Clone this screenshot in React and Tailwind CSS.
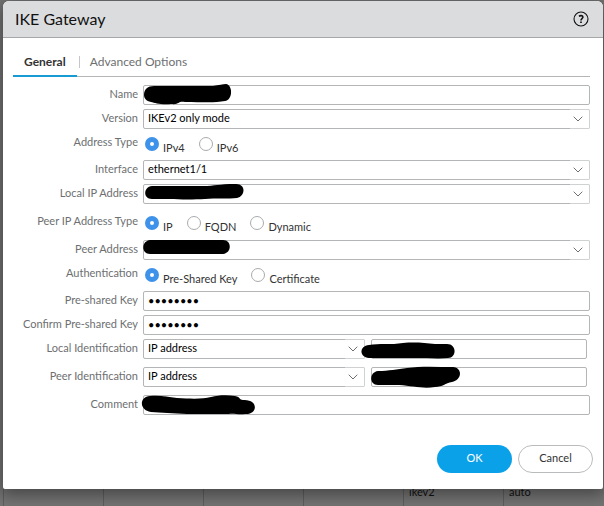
import { useState } from 'react'

const COLUMNS = ['', '', '', '', 'ikev2', 'auto']

const FIELD = 'block w-full h-5 border border-[#b3b5b6] rounded-xs bg-white pl-1 pr-1 pb-0.5 text-[11px] leading-4 text-black outline-none'

// marker strokes drawn over the values that must not be readable
const MARKS = {
  name: 'M1 10C1 4 5 1 11 1L70 1C76 0 80-1 83-1C90 0 90 15 82 16C72 18 60 17 42 17C34 16 37 20 28 19C18 20 12 18 8 17C3 16 1 13 1 10Z',
  localIp: 'M9 2L60 2C72 2 76 0 92 0C103-1 103 12 94 14C86 15 72 14 62 15C46 16 24 15 9 15C0 15 0 3 9 2Z',
  peer: 'M7 0L80 0C89 0 89 13 80 14L7 14C-2 14-2 1 7 0Z',
  localId: 'M-2 6C8 4 20 6 32 4C44 3 54 4 64 5L76 5C86 5 86 19 77 19C68 20 56 19 44 19L-2 19C-12 18-12 7-2 6Z',
  peerId: 'M7 4C18 4 26 2 36 1C50-1 66 0 82 0C92 1 91 13 81 15C74 16 72 20 64 20C52 22 42 19 28 18L7 18C-2 18-2 5 7 4Z',
  comment: 'M7 1C18 0 24 2 34 3C50 4 60 4 68 2C76 0 84 0 92 1C98 2 96 5 100 5C116 4 115 20 102 19C96 20 90 18 86 19C72 19 56 19 44 19C30 18 18 18 8 17C-4 15-4 2 7 1Z',
}

function Mark({ id }) {
  return (
    <svg className="absolute left-0 top-0 w-28 h-5 overflow-visible pointer-events-none" viewBox="0 0 112 20" aria-hidden="true">
      <path d={MARKS[id]} fill="#000" />
    </svg>
  )
}

function Row({ label, id, className = '', children }) {
  return (
    <div className={`flex gap-[5px] ${className}`}>
      <label htmlFor={id} className="w-[125px] shrink-0 text-right text-[11px] leading-[18px] text-[#6d6f71] whitespace-nowrap">
        {label}
      </label>
      <div className="flex-1 min-w-0">{children}</div>
    </div>
  )
}

function TextField({ id, type = 'text', defaultValue = '', mark, label }) {
  return (
    <div className="relative flex-1">
      <input id={id} type={type} defaultValue={defaultValue} aria-label={label} className={FIELD} />
      {mark && <Mark id={mark} />}
    </div>
  )
}

function Combo({ id, options = [''], mark }) {
  return (
    <div className="relative w-full">
      <select id={id} className={`${FIELD} appearance-none`}>
        {options.map(o => <option key={o}>{o}</option>)}
      </select>
      <span className="absolute right-0 top-0 w-5 h-5 flex items-center justify-center border border-l-0 border-[#cfd1d2] rounded-r-xs bg-white pointer-events-none">
        <svg width="10" height="6" viewBox="0 0 10 6" fill="none" className="mr-1" aria-hidden="true">
          <path d="M0.7 0.7L5 5L9.3 0.7" stroke="#6d6f71" strokeWidth="1" />
        </svg>
      </span>
      {mark && <Mark id={mark} />}
    </div>
  )
}

function RadioRow({ label, name, options, className }) {
  const [value, setValue] = useState(options[0])
  return (
    <fieldset className={`flex gap-[5px] h-6 ${className}`}>
      <legend className="float-left w-[125px] shrink-0 text-right text-[11px] leading-[18px] text-[#6d6f71] whitespace-nowrap">
        {label}
      </legend>
      <div className="flex gap-3.5 pl-0.5 pt-1">
        {options.map(o => (
          <label key={o} className="flex items-start gap-1 text-[11px] text-[#333]">
            <input
              type="radio"
              name={name}
              checked={value === o}
              onChange={() => setValue(o)}
              className="appearance-none w-3.5 h-3.5 shrink-0 rounded-full border border-[#a9abac] bg-white checked:border-5 checked:border-[#3f92ea]"
            />
            <span className="pt-[3px] leading-4">{o}</span>
          </label>
        ))}
      </div>
    </fieldset>
  )
}

export default function App() {
  return (
    <div className="relative min-h-screen overflow-hidden bg-[#747474] pt-px pl-[3px] pr-px pb-4 font-['Lato',sans-serif]">
      {/* table row behind the dialog */}
      <div className="absolute inset-x-0 bottom-0 h-6 pl-[3px] flex overflow-hidden">
        {COLUMNS.map((c, i) => (
          <div key={i} className="w-[100px] shrink-0 border-l border-[#5e5e5e] pl-[5px] text-[11px] leading-5 text-[#111]">{c}</div>
        ))}
      </div>

      <section className="relative rounded-t-md rounded-b-xs bg-white shadow-[0_4px_16px_2px_rgba(0,0,0,0.4)]">
        <header className="flex items-center justify-between h-[37px] pb-px pl-3 pr-3.5 rounded-t-md bg-[#dbdcde] border-b border-[#a5a7a9]">
          <h1 className="text-base text-[#111]">IKE Gateway</h1>
          <button type="button" aria-label="Help">
            <svg width="16" height="16" viewBox="0 0 16 16" fill="none" stroke="#111" aria-hidden="true">
              <circle cx="8" cy="8" r="7" strokeWidth="1.1" />
              <path d="M6 5.3C7.2 4.3 9.9 4.3 9.9 6.1C9.9 7.6 8 7.6 8 9.4" strokeWidth="1.6" />
              <path d="M8 10.4V12.1" strokeWidth="1.7" />
            </svg>
          </button>
        </header>

        <nav className="flex items-end mt-2 ml-2.5 mr-[13px] h-[31px] border-b border-[#b3b5b6]">
          <button type="button" className="h-7 -mb-px px-[11px] border-b-2 border-[#189ad3] text-xs font-bold text-[#333]">General</button>
          <span className="h-3 w-px mb-2 ml-0.5 bg-[#c4c6c8]" />
          <button type="button" className="h-7 px-2.5 pb-px text-xs text-[#6d6f71]">Advanced Options</button>
        </nav>

        <form className="ml-2.5 mr-[13px] pt-2" onSubmit={e => e.preventDefault()}>
          <Row label="Name" id="name"><TextField id="name" mark="name" /></Row>
          <Row label="Version" id="version" className="mt-1">
            <Combo id="version" options={['IKEv2 only mode', 'IKEv1 only mode', 'IKEv2 preferred mode']} />
          </Row>
          <RadioRow label="Address Type" name="family" options={['IPv4', 'IPv6']} className="mt-1" />
          <Row label="Interface" id="interface" className="mt-[3px]">
            <Combo id="interface" options={['ethernet1/1']} />
          </Row>
          <Row label="Local IP Address" id="local-ip" className="mt-1"><Combo id="local-ip" mark="localIp" /></Row>
          <RadioRow label="Peer IP Address Type" name="peer-type" options={['IP', 'FQDN', 'Dynamic']} className="mt-2" />
          <Row label="Peer Address" id="peer" className="mt-1"><Combo id="peer" mark="peer" /></Row>
          <RadioRow label="Authentication" name="auth" options={['Pre-Shared Key', 'Certificate']} className="mt-1" />
          <Row label="Pre-shared Key" id="psk" className="mt-[3px]">
            <TextField id="psk" type="password" defaultValue="password" />
          </Row>
          <Row label="Confirm Pre-shared Key" id="psk2" className="mt-1">
            <TextField id="psk2" type="password" defaultValue="password" />
          </Row>
          <Row label="Local Identification" id="local-id" className="mt-1">
            <div className="flex gap-1.5 pr-[3px]">
              <div className="w-1/2 shrink-0"><Combo id="local-id" options={['IP address', 'FQDN (hostname)']} /></div>
              <TextField mark="localId" label="Local identification value" />
            </div>
          </Row>
          <Row label="Peer Identification" id="peer-id" className="mt-2">
            <div className="flex gap-1.5 pr-[3px]">
              <div className="w-1/2 shrink-0"><Combo id="peer-id" options={['IP address', 'FQDN (hostname)']} /></div>
              <TextField mark="peerId" label="Peer identification value" />
            </div>
          </Row>
          <Row label="Comment" id="comment" className="mt-2"><TextField id="comment" mark="comment" /></Row>
        </form>

        <footer className="flex justify-end gap-1.5 pt-[30px] pb-4 pr-2.5">
          <button type="button" className="w-[75px] h-7 pb-0.5 rounded-full bg-[#0ba1e8] text-[11px] text-white">OK</button>
          <button type="button" className="w-[75px] h-7 pb-0.5 rounded-full border border-[#b9bbbd] bg-white text-[11px] text-[#333]">Cancel</button>
        </footer>
      </section>
    </div>
  )
}
